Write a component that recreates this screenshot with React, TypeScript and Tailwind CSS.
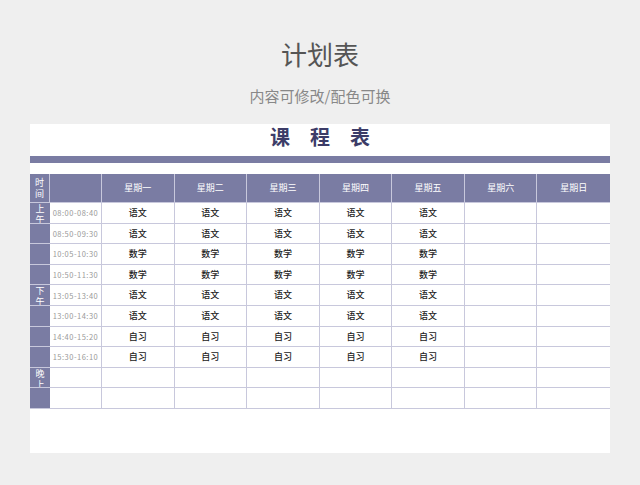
const days = ["星期一", "星期二", "星期三", "星期四", "星期五", "星期六", "星期日"];
const rows: { side: string; time: string; subj: string }[] = [
  { side: "上午", time: "08:00-08:40", subj: "语文" },
  { side: "", time: "08:50-09:30", subj: "语文" },
  { side: "", time: "10:05-10:30", subj: "数学" },
  { side: "", time: "10:50-11:30", subj: "数学" },
  { side: "下午", time: "13:05-13:40", subj: "语文" },
  { side: "", time: "13:00-14:30", subj: "语文" },
  { side: "", time: "14:40-15:20", subj: "自习" },
  { side: "", time: "15:30-16:10", subj: "自习" },
  { side: "晚上", time: "", subj: "" },
  { side: "", time: "", subj: "" },
];

function Stack({ text }: { text: string }) {
  return (
    <div className="flex flex-col items-center text-[9px] leading-[11px] text-white">
      {text.split("").map((c, i) => (
        <span key={i} className="block h-[11px]">{c}</span>
      ))}
    </div>
  );
}

export default function App() {
  return (
    <div className="w-[640px] h-[485px] bg-[#efefef] pt-[36px]" style={{ fontFamily: '"Noto Sans CJK SC", "Noto Sans", sans-serif' }}>
      <div className="text-center text-[26px] leading-[36px] text-[#555]">计划表</div>
      <div className="text-center text-[15px] leading-[20px] text-[#888] mt-[14px]">内容可修改/配色可换</div>
      <div className="mx-[30px] mt-[18px] h-[329px] bg-white">
        <div className="text-center text-[20px] leading-[26px] font-bold text-[#3c3c68] tracking-[20px] pl-[20px]">课程表</div>
        <div className="mt-[6px] h-[7px] bg-[#7a7ca3]" />
        <div className="mt-[11px] grid grid-cols-[20px_52px_repeat(7,1fr)] grid-rows-[28px_repeat(10,20.6px)] border-b border-[#c8c8dc]">
          <div className="bg-[#7a7ca3] flex items-center justify-center border-r border-[#c8c8dc]"><Stack text="时间" /></div>
          <div className="bg-[#7a7ca3] border-r border-[#c8c8dc]" />
          {days.map((d, i) => (
            <div key={d} className={`bg-[#7a7ca3] flex items-center justify-center text-[9px] text-white ${i < 6 ? "border-r border-[#c8c8dc]" : ""}`}>{d}</div>
          ))}
          {rows.map((r, ri) => (
            <>
              <div key={`s${ri}`} className="bg-[#7a7ca3] border-t border-[#c8c8dc] flex items-start justify-center">
                {r.side && <Stack text={r.side} />}
              </div>
              <div key={`t${ri}`} className="border-t border-r border-[#c8c8dc] flex items-center justify-center text-[7.5px] text-[#999] tracking-[0.5px]">{r.time}</div>
              {days.map((d, i) => (
                <div key={`${ri}${d}`} className={`border-t border-[#c8c8dc] flex items-center justify-center text-[9px] font-medium text-[#222] ${i < 6 ? "border-r" : ""}`}>
                  {i < 5 ? r.subj : ""}
                </div>
              ))}
            </>
          ))}
        </div>
      </div>
    </div>
  );
}
